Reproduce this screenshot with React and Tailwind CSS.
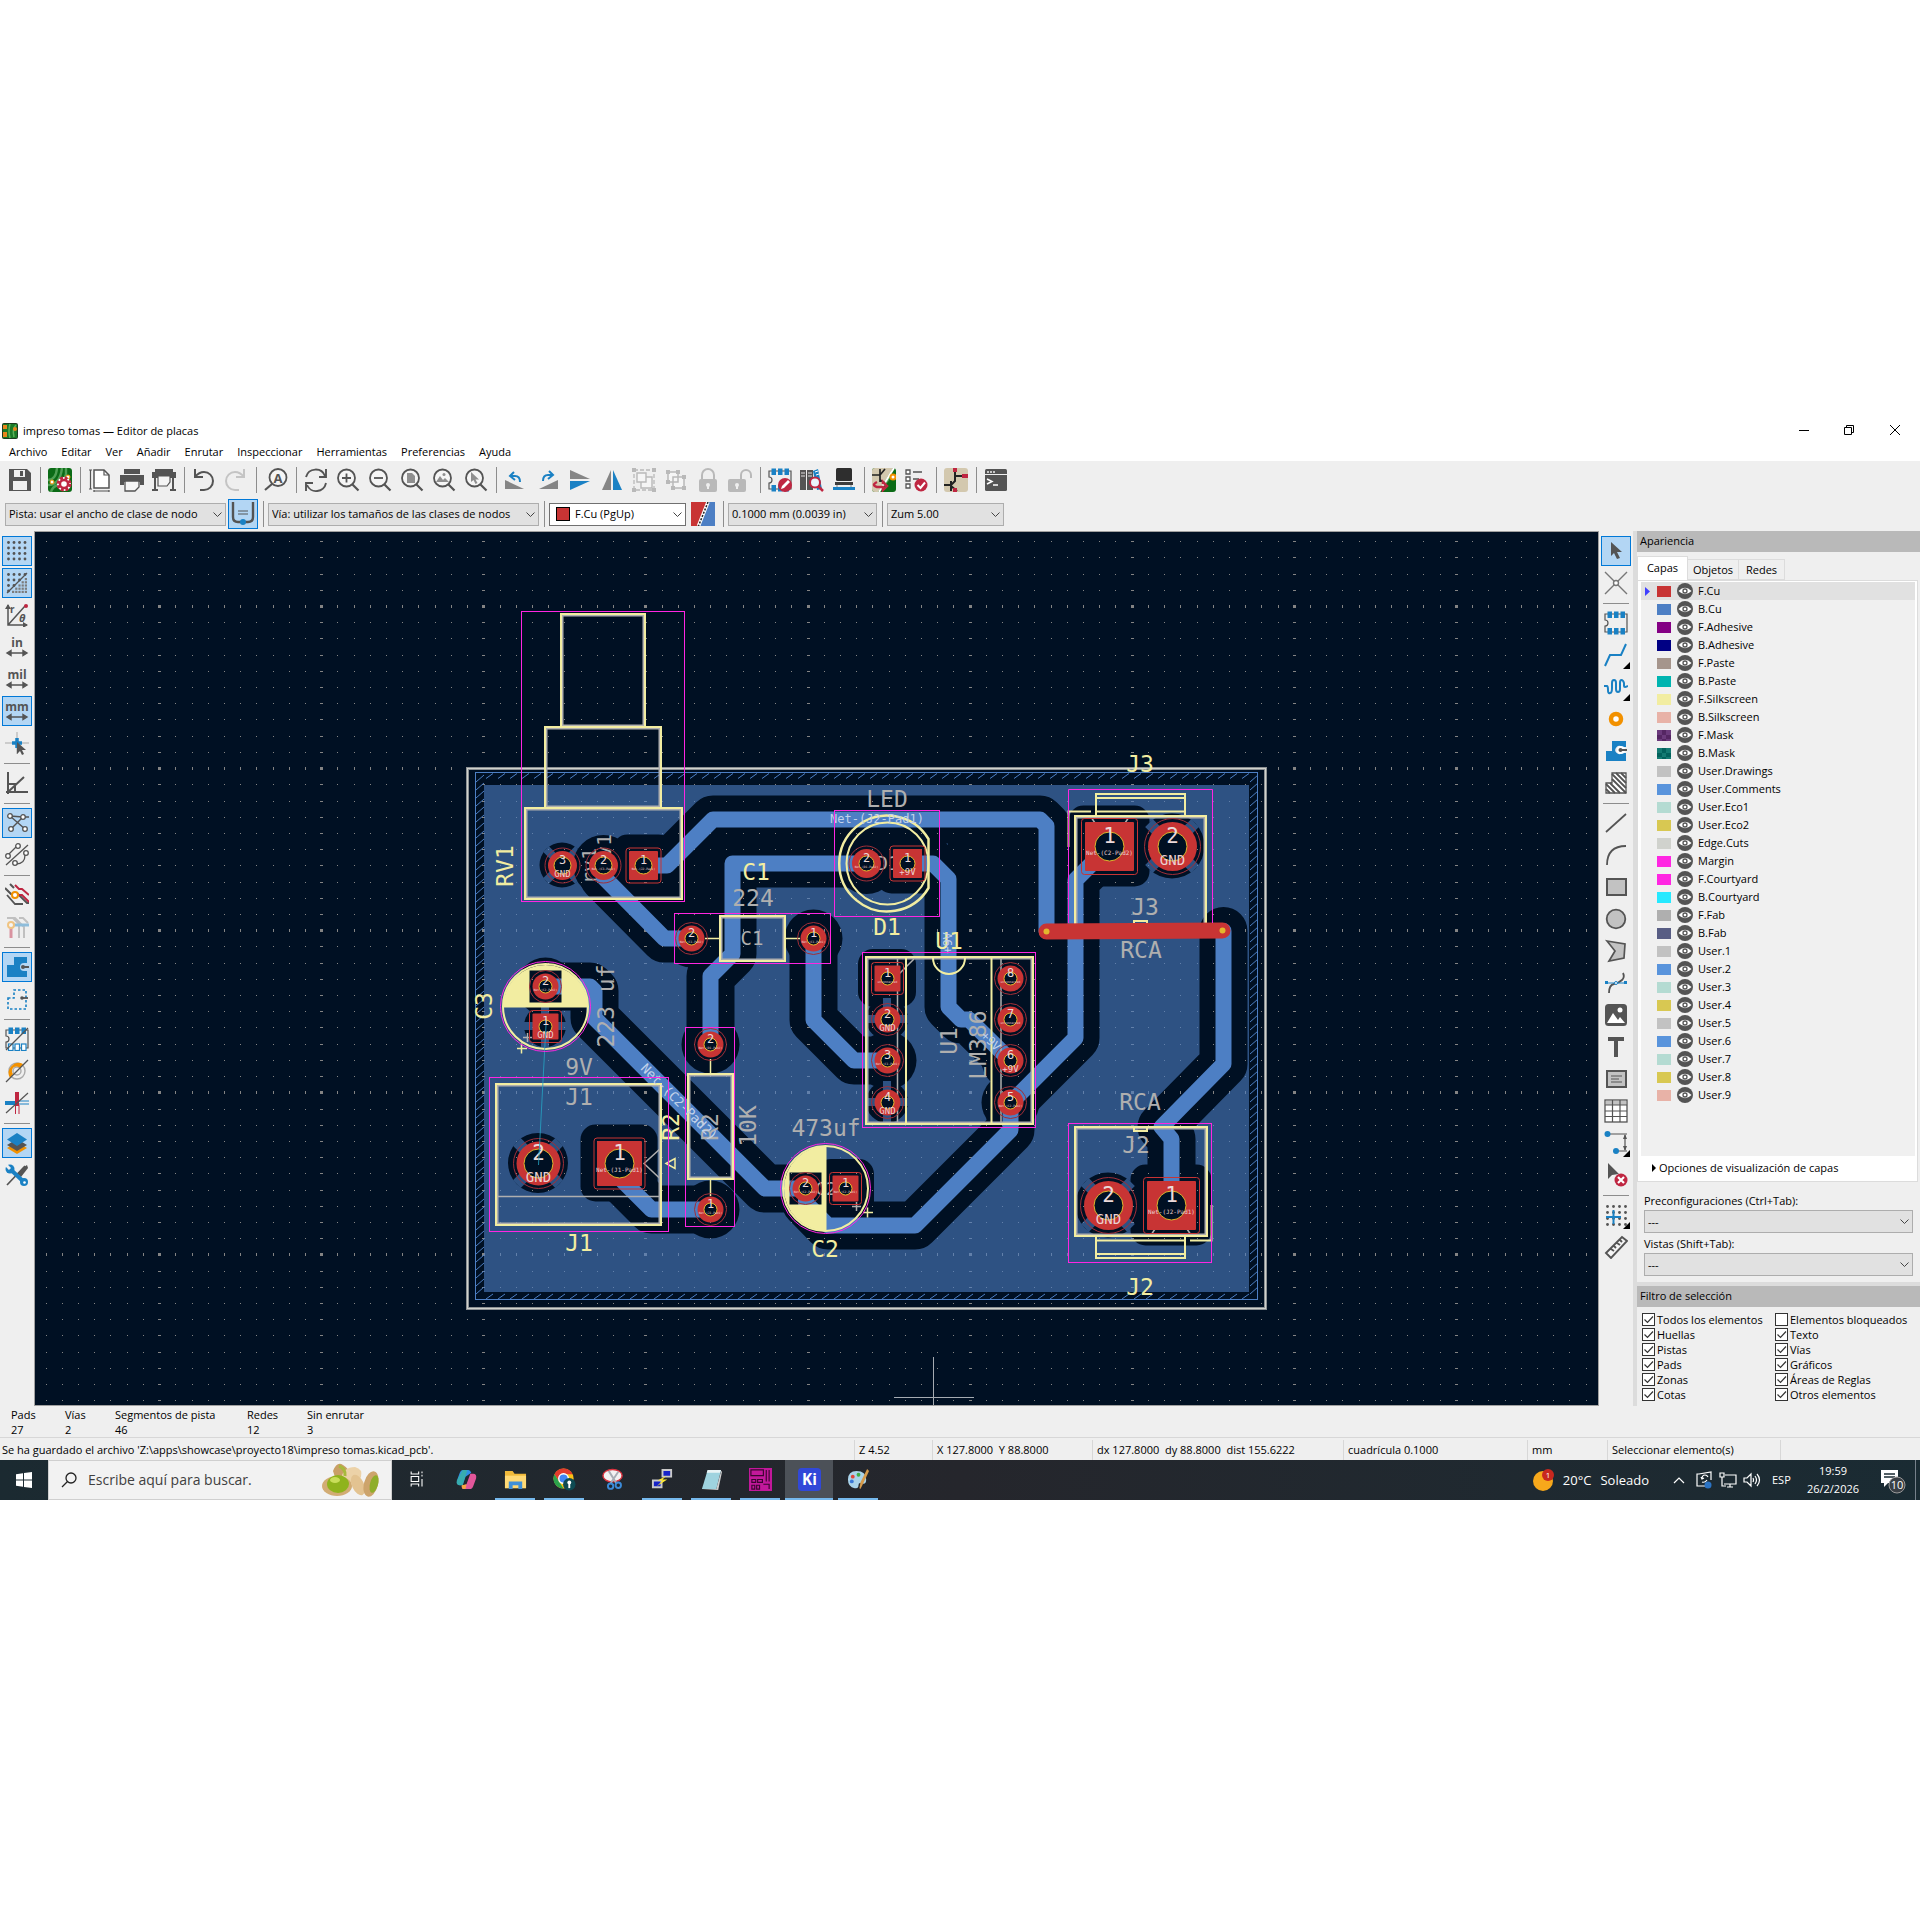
import React, { useState } from 'react';
import clsx from 'clsx';

const DARK = '#545454';
const BLUE = '#1a81c4';
const RED = '#bf2641';
const GREY = '#b9b9b9';
const ORANGE = '#f29100';

const Magnifier = ({ children }) => (
  <>
    <circle cx="10.5" cy="10" r="8.5" fill="#f5f5f5" stroke={DARK} strokeWidth="1.8" />
    <path d="M16.5 16.5l6 6" stroke={DARK} strokeWidth="2.2" />
    {children}
  </>
);

const Chip = ({ slash }) => (
  <>
    <path d="M1 3h22v18H1v-6q3 0 3-3t-3-3z" fill="none" stroke={DARK} strokeWidth="1.2" />
    {[3.5, 10, 16.5].map((x) => (
      <g key={x}>
        <rect x={x} y="0.5" width="4.5" height="6.5" fill={BLUE} />
        <rect x={x} y="17" width="4.5" height="6.5" fill={slash ? '#fff' : BLUE} stroke={BLUE} strokeWidth={slash ? 1.2 : 0} />
      </g>
    ))}
    {slash && <path d="M1 23L23 1" stroke={DARK} strokeWidth="1.2" />}
  </>
);

const Board = () => (
  <>
    <rect width="24" height="24" rx="3" fill="#0b6b16" />
    <path d="M0 12Q8 12 9 0M0 17Q12 17 14 0M3 24Q4 19 10 17T18 6V0" fill="none" stroke="#4fa055" strokeWidth="2.4" />
  </>
);

const Arrows = ({ y = 18 }) => (
  <path d={`M4 ${y}h16M6 ${y - 2.5}L2 ${y}l4 2.5zM18 ${y - 2.5}l4 2.5-4 2.5z`} fill={DARK} stroke={DARK} strokeWidth="1.4" />
);

const Unit = ({ children }) => (
  <>
    <text x="12" y="12" textAnchor="middle" fontSize="12" fontWeight="700" fill={DARK} fontFamily="Open Sans, sans-serif">{children}</text>
    <Arrows />
  </>
);

const dots = (max, step = 5.5) => {
  const out = [];
  for (let i = 0; i < 4; i++) for (let j = 0; j < 4; j++) if (i + j <= max) out.push([3.5 + i * step, 3.5 + j * step]);
  return out.map(([x, y]) => <circle key={`${x}-${y}`} cx={x} cy={y} r="1.4" fill={DARK} />);
};

const ICONS = {
  save: <><path d="M1 1h18l4 4v18H1z" fill={DARK} /><path d="M6 2h11v7H6zM5 13h14v9H5z" fill="#efefef" /><path d="M12 3h3v5h-3z" fill={DARK} /></>,
  board: <><Board /><circle cx="4" cy="14" r="2" fill="#fff" stroke={ORANGE} /><circle cx="20" cy="9" r="2" fill="#fff" stroke={ORANGE} /><circle cx="16" cy="16" r="4.5" fill="none" stroke="#fff" strokeWidth="5" /><circle cx="16" cy="16" r="6" fill="none" stroke={RED} strokeWidth="3" strokeDasharray="3 1.7" /><circle cx="16" cy="16" r="4" fill="#fff" stroke={RED} strokeWidth="2.4" /></>,
  page: <><path d="M6 2h10l5 5v13H6z" fill="#fff" stroke={DARK} strokeWidth="1.5" /><path d="M16 2v5h5M1 2h3M2.5 2v19M1 21h3M6 23h15M6 22v2M21 22v2" fill="none" stroke={DARK} strokeWidth="1.2" /></>,
  print: <><path d="M4 1h16v5H4zM0 7h24v10h-4v-3H4v3H0z" fill={DARK} /><path d="M5 13h14v6l-4 4H5z" fill="#f5f5f5" stroke={DARK} strokeWidth="1.3" /></>,
  plot: <><path d="M3 1h18v4H3zM0 4h24v6H0zM2 10h2v12H2zM20 10h2v12h-2zM0 21h6v2H0zM18 21h6v2h-6z" fill={DARK} /><path d="M6 8h12v6l-3 4H6z" fill="#f5f5f5" stroke={DARK} strokeWidth="1.2" /></>,
  undo: <path d="M3 1v8h8M3 9Q7 4 12 4a9 9 0 0 1 0 18H8" fill="none" stroke={DARK} strokeWidth="2" />,
  redo: <path d="M20 1v8h-8M20 9Q16 4 11 4a9 9 0 0 0 0 18h4" fill="none" stroke="#c4c4c4" strokeWidth="2" />,
  find: <><circle cx="14" cy="9.5" r="8.5" fill="#f5f5f5" stroke={DARK} strokeWidth="1.8" /><path d="M8 16l-7 6" stroke={DARK} strokeWidth="2.2" /><text x="14" y="14.5" textAnchor="middle" fontSize="13" fontWeight="700" fill={DARK} fontFamily="Open Sans, sans-serif">A</text></>,
  refresh: <path d="M2 9a10 10 0 0 1 19-1M22 15a10 10 0 0 1-19 2M22 1v8h-7M2 23v-8h7" fill="none" stroke={DARK} strokeWidth="1.9" />,
  zoomIn: <Magnifier><path d="M6 10h9M10.5 5.5v9" stroke={DARK} strokeWidth="1.8" /></Magnifier>,
  zoomOut: <Magnifier><path d="M6 10h9" stroke={DARK} strokeWidth="1.8" /></Magnifier>,
  zoomPage: <Magnifier><path d="M7 5h5l3 3v7H7z" fill="#8f8f8f" /></Magnifier>,
  zoomFit: <Magnifier><path d="M4 14l4-6 3 4 2-2 4 4z" fill="#8f8f8f" /><circle cx="12" cy="6.5" r="1.5" fill="#8f8f8f" /></Magnifier>,
  zoomSel: <Magnifier><path d="M7 4v10l2.5-2 2 4 2-1-2-3.500h3.5z" fill="#8f8f8f" /></Magnifier>,
  rotL: <><path d="M1 12v9h19z" fill="#858585" /><path d="M10 4L6 8l5 4M6 8h5q5 0 5 6" fill="none" stroke={BLUE} strokeWidth="2" /></>,
  rotR: <><path d="M22 12v9H3z" fill="#858585" /><path d="M13 3l4 4-5 4M17 7h-5q-5 0-5 6" fill="none" stroke={BLUE} strokeWidth="2" /></>,
  flipV: <><path d="M2 2l20 9H2z" fill="#858585" /><path d="M2 22l20-9H2z" fill={BLUE} /></>,
  flipH: <><path d="M2 22l9-20v20z" fill="#858585" /><path d="M22 22L13 2v20z" fill={BLUE} /></>,
  group: <><path d="M2 2h20v20H2z" fill="none" stroke={GREY} strokeWidth="1.3" strokeDasharray="4 2" /><path d="M0 0h4v4H0zM20 0h4v4h-4zM0 20h4v4H0zM20 20h4v4h-4z" fill={GREY} /><path d="M9 9h11v11H9z" fill="#f5f5f5" stroke={GREY} strokeWidth="1.4" /><path d="M5 5h9v9H5z" fill="#f5f5f5" stroke={GREY} strokeWidth="1.4" /></>,
  ungroup: <><path d="M9 9h11v11H9zM4 4h10v10H4z" fill="#f5f5f5" stroke={GREY} strokeWidth="1.5" /><path d="M2 2h4v4H2zM12 2h4v4h-4zM2 12h4v4H2zM18 7h4v4h-4zM7 18h4v4H7zM18 18h4v4h-4z" fill={GREY} /></>,
  lock: <><path d="M6 12V7a6 6 0 0 1 12 0v5" fill="none" stroke={GREY} strokeWidth="2" /><rect x="3" y="11" width="18" height="13" rx="2" fill={GREY} /><circle cx="12" cy="17" r="2" fill="#efefef" /><path d="M11 17h2v4h-2z" fill="#efefef" /></>,
  unlock: <><path d="M13 12V7a5 5 0 0 1 10 0v3" fill="none" stroke={GREY} strokeWidth="2" /><rect x="0" y="11" width="18" height="13" rx="2" fill={GREY} /><circle cx="9" cy="17" r="2" fill="#efefef" /><path d="M8 17h2v4H8z" fill="#efefef" /></>,
  fpEdit: <><Chip /><circle cx="17" cy="17" r="7" fill={RED} /><path d="M13 21l1-3 6-6 2 2-6 6z" fill="#fff" /></>,
  lib: <><path d="M0 2h6v20H0zM7 2h6v20H7z" fill={DARK} /><path d="M1 5h4M1 8h4M8 5h4M8 8h4" stroke="#ddd" strokeWidth="1.2" /><path d="M13 3l5-2 4 20-5 1z" fill={BLUE} /><path d="M15 4l3-1M16 7l3-1" stroke="#fff" /><circle cx="15" cy="14.5" r="5" fill="#eaf3fa" stroke={RED} strokeWidth="2" /><path d="M18 18l5 5" stroke={RED} strokeWidth="2.5" /></>,
  fpView: <><rect x="4" y="0" width="16" height="13" rx="1.5" fill="#2e2e2e" /><path d="M3 14h18v3H3z" fill="#3d3d3d" /><path d="M5 17v3M19 17v3" stroke="#888" /><path d="M1 19h22v3H1z" fill={BLUE} /></>,
  update: <><Board /><path d="M0 3q0-3 3-3h18L6 24H3q-3 0-3-3z" fill="#d3c8ae" /><path d="M22 0L7 24" stroke="#fff" strokeWidth="2" /><path d="M0 7h8M8 1v13M8 7l5-6M8 12l5 3" stroke="#222" strokeWidth="1.7" /><circle cx="21" cy="9" r="2.5" fill="#fff" stroke={ORANGE} strokeWidth="2" /><path d="M5 14q-6 3 0 5h6v3l4-4-4-4v2" fill="none" stroke={RED} strokeWidth="2.5" /></>,
  drc: <><path d="M2 2h4v4H2zM2 9h4v4H2zM2 16h4v4H2z" fill="#fff" stroke={DARK} strokeWidth="1.3" /><path d="M9 4h9M9 11h6" stroke={DARK} strokeWidth="1.4" /><circle cx="17" cy="17" r="6.5" fill={RED} /><path d="M13.5 17l3 3 4.5-5.5" fill="none" stroke="#fff" strokeWidth="2" /></>,
  sch: <><rect width="24" height="24" rx="3" fill="#d3c8ae" /><path d="M11 0v8h11M11 8v5l-5 5M0 17h6M7 13v10M7 18l6 5" fill="none" stroke="#222" strokeWidth="2" /><path d="M9 0h4v4H9zM18 6h6v4h-6zM9 20h4v4H9z" fill={RED} /></>,
  console: <><rect x="1" y="1" width="22" height="22" rx="1.5" fill={DARK} /><path d="M1 6.5h22" stroke="#efefef" /><path d="M3 4h2M6 4h2M9 4h2" stroke="#eee" strokeWidth="1.4" /><path d="M3 11l5 2.5-5 2.5M9 17h5" fill="none" stroke="#fff" strokeWidth="1.5" /></>,
  trackAuto: <><path d="M2 0v15q0 5 5 5h10q5 0 5-5V0" fill="none" stroke={DARK} strokeWidth="2.4" /><path d="M7 9h10M7 12h10" stroke={DARK} strokeWidth="1.2" /><circle cx="12" cy="20" r="3" fill={BLUE} /></>,
  layerPair: <><path d="M0 0h16L7 24H0z" fill="#c83434" /><path d="M18 0h6v24H8z" fill="#4d7fc4" /><path d="M17 0L7.5 24" stroke="#fff" strokeWidth="3.5" /><path d="M17 0L7.5 24" stroke="#222" strokeWidth="1.5" strokeDasharray="2 1.5" /></>,
  grid: dots(9),
  gridOver: <>{dots(3)}<path d="M2 22L22 2" stroke={DARK} strokeWidth="1.2" />{[0, 1, 2, 3, 4].flatMap((i) => [0, 1, 2, 3, 4].filter((j) => i + j >= 4).map((j) => <rect key={`${i}${j}`} x={7 + i * 3.2} y={7 + j * 3.2} width="2.2" height="2.2" fill="#7c7c7c" />))}</>,
  polar: <><path d="M3 2v20h19M3 22L20 3" fill="none" stroke={DARK} strokeWidth="1.5" /><path d="M0 6l3-5 3 5zM18 19l5 3-5 3z" fill={DARK} /><circle cx="21" cy="3" r="2" fill={RED} /><text x="5" y="10" fontSize="10" fontWeight="700" fill={DARK} fontFamily="Open Sans, sans-serif">r</text><text x="14" y="19" fontSize="11" fontStyle="italic" fontWeight="700" fill={DARK} fontFamily="Open Sans, sans-serif">θ</text></>,
  inch: <Unit>in</Unit>,
  mil: <Unit>mil</Unit>,
  mm: <Unit>mm</Unit>,
  crosshair: <><path d="M0 12h24M12 1v22" stroke="#a9a9a9" /><path d="M7 12h10M12 7v10" stroke={BLUE} strokeWidth="3.5" /><path d="M12 11v12l3-3 2 4 2-1-2-4h4z" fill={DARK} /></>,
  angle: <path d="M3 1v22M1 21h22M3 21L19 6M3 13h7v8" fill="none" stroke={DARK} strokeWidth="2" />,
  ratsnest: <><path d="M5 5l15 13M6 18L18 6h6M5 5l13 1" fill="none" stroke={DARK} strokeWidth="1.4" />{[[5, 5], [18, 6], [6, 18], [20, 18]].map(([x, y]) => <circle key={`${x}${y}`} cx={x} cy={y} r="2.3" fill="#fff" stroke={DARK} strokeWidth="1.3" />)}</>,
  curved: <><path d="M1 22L23 2M3 12l9-9M11 21q9 0 9-9" fill="none" stroke={DARK} strokeWidth="1.3" />{[[3, 13], [13, 3], [10, 20], [21, 10]].map(([x, y]) => <circle key={`${x}${y}`} cx={x} cy={y} r="2.3" fill="#fff" stroke={DARK} strokeWidth="1.3" />)}</>,
  highlight: <><path d="M0 5l6 6h7l9 9h2M5 1l4 4" fill="none" stroke={DARK} strokeWidth="2" /><path d="M10 2l4 4h3l7 6M12 12h5l7 7" fill="none" stroke={RED} strokeWidth="2" /><path d="M2 12l8 9h8" fill="none" stroke={DARK} strokeWidth="1.8" /><circle cx="10" cy="12" r="3" fill="#fff" stroke={ORANGE} strokeWidth="2" /></>,
  netColor: <g opacity=".45"><path d="M2 3h8l9 9v11M8 3l6 6v14M14 3h4l5 5" fill="none" stroke="#888" strokeWidth="2" /><path d="M6 12v11" stroke={RED} strokeWidth="3" /><path d="M9 10h15" stroke={BLUE} strokeWidth="3" /><circle cx="6" cy="10" r="3" fill="#fff" stroke={ORANGE} strokeWidth="2" /></g>,
  zone: <><path d="M2 10h7V2h13v6h-3a4 4 0 1 0 0 8h3v6H2z" fill={BLUE} /><path d="M18 12h6" stroke={DARK} strokeWidth="2" /><circle cx="18" cy="12" r="2" fill={DARK} /></>,
  zoneOutline: <><path d="M3 11h6V3h12v19H3z" fill="none" stroke={BLUE} strokeWidth="1.6" strokeDasharray="2.5 2" /><path d="M17 11h6" stroke={DARK} strokeWidth="1.8" /><circle cx="17" cy="11" r="1.8" fill={DARK} /></>,
  chipSlash: <Chip slash />,
  padSketch: <><circle cx="12" cy="12" r="8" fill="none" stroke="#aaa" strokeWidth="1.4" /><circle cx="12" cy="12" r="4" fill="none" stroke="#aaa" strokeWidth="1.4" /><path d="M5 19a10 10 0 0 1 13-14l-3 4a4.500 4.500 0 0 0-7 6z" fill={ORANGE} /><path d="M1 23L23 1" stroke={DARK} strokeWidth="1.2" /></>,
  trackSketch: <><path d="M0 12h12" stroke={BLUE} strokeWidth="4" /><path d="M12 10h12M12 13h12" stroke={BLUE} /><path d="M12 1v14" stroke={RED} strokeWidth="4" /><path d="M10.5 14v9M14 14v9" stroke={RED} /><path d="M1 22L23 2" stroke={DARK} strokeWidth="1.2" /></>,
  layers: <><path d="M12 11l10 6-10 6-10-6z" fill={ORANGE} /><path d="M12 8l10 6-10 6-10-6z" fill={DARK} /><path d="M12 2l10 6.5-10 6.5-10-6.500z" fill={BLUE} /></>,
  tools: <><path d="M2 22L20 3" stroke={DARK} strokeWidth="1.7" /><path d="M12 11l7-7 3-2 1 3-7 9z" fill={DARK} /><path d="M4 5l16 15" stroke={BLUE} strokeWidth="4" /><circle cx="5" cy="6" r="4.5" fill={BLUE} /><circle cx="19" cy="19" r="4" fill={BLUE} /><path d="M0 1l5 5" stroke="#efefef" strokeWidth="3" /><circle cx="19.5" cy="19.5" r="1.3" fill="#fff" /></>,
  select: <path d="M7 3v14l3-3 3 6 3-1-3-6h5z" fill={DARK} />,
  localRats: <><path d="M1 1l22 22M23 1L1 23" stroke="#777" strokeWidth="1.4" /><circle cx="12" cy="12" r="2.5" fill="#fff" stroke="#777" strokeWidth="1.4" /></>,
  chip: <Chip />,
  route: <path d="M1 23l5-11h11l5-11" fill="none" stroke={BLUE} strokeWidth="2" />,
  tune: <path d="M0 11h3q1 0 1 4t2 3q2 0 2-5V8q0-3 2-3t2 3v6q0 3 2 3t2-3V8q0-3 1.500-3T20 8v3q0 2 4 0" fill="none" stroke={BLUE} strokeWidth="2" />,
  via: <circle cx="12" cy="12" r="5" fill="#fff" stroke={ORANGE} strokeWidth="4.5" />,
  zoneWhite: <><path d="M2 12h6V2h14v6h-4a4 4 0 1 0 0 6h4v8H2z" fill={BLUE} /><circle cx="17" cy="11" r="4" fill="#fff" /><path d="M17 11h6" stroke={DARK} strokeWidth="2" /><circle cx="16.5" cy="11" r="2" fill={DARK} /></>,
  ruleArea: <><path d="M2 12h6V2h14v20H2z" fill="#fff" stroke={DARK} strokeWidth="1.3" /><path d="M8 3l14 14M12 2l10 10M17 2l5 5M8 8l14 14M6 12l10 10M2 13l9 9M2 18l4 4" stroke={DARK} strokeWidth="1.8" /></>,
  line: <path d="M2 21L22 3" stroke={DARK} strokeWidth="1.7" />,
  arc: <path d="M3 22Q3 3 22 3" fill="none" stroke={DARK} strokeWidth="1.8" />,
  rect: <rect x="3" y="4" width="19" height="16" fill="#c2c2c2" stroke={DARK} strokeWidth="2" />,
  circle: <circle cx="12" cy="12" r="9.3" fill="#c2c2c2" stroke={DARK} strokeWidth="1.8" />,
  poly: <path d="M3 2l18 3-1 14-15 3 6-10z" fill="#c2c2c2" stroke={DARK} strokeWidth="1.7" />,
  bezier: <><path d="M5 22q0-8 5-9t8-4 1-7" fill="none" stroke={DARK} strokeWidth="1.8" /><path d="M2 12h20" stroke={BLUE} /><path d="M1 10h3v3H1zM20 10h3v3h-3z" fill={BLUE} /><circle cx="12" cy="12" r="1.5" fill="#fff" stroke={BLUE} /></>,
  image: <><rect x="1" y="1" width="22" height="22" rx="3.5" fill={DARK} /><path d="M3 20l6-10 5 7 2-3 5 6z" fill="#fff" /><circle cx="16" cy="7" r="2.5" fill="#fff" /></>,
  text: <path d="M4 2h16v4h-6v16h-4V6H4z" fill={DARK} />,
  textBox: <><rect x="3" y="4" width="19" height="16" fill="#c2c2c2" stroke={DARK} strokeWidth="2" /><path d="M7 9h11M7 12h8M7 15h11" stroke={DARK} strokeWidth="1.2" /></>,
  table: <><rect x="1" y="1" width="22" height="22" fill="#fff" stroke={DARK} strokeWidth="1.3" /><path d="M2 2h20v4H2z" fill="#c2c2c2" /><path d="M1 6h22M1 12h22M1 17.5h22M8.5 1v22M16 1v22" stroke={DARK} strokeWidth="1.2" /></>,
  dimension: <><path d="M3 3h20M12 20h11M21 4v15" stroke={DARK} strokeWidth="1.2" /><path d="M19 8l2-5 2 5zM19 15l2 5 2-5z" fill={DARK} /><circle cx="3.5" cy="3" r="3" fill={BLUE} /><circle cx="12" cy="20" r="3" fill={BLUE} /></>,
  remove: <><path d="M4 0v16l4-4 7-1z" fill={DARK} /><circle cx="17" cy="17" r="6.5" fill={RED} /><path d="M14 14l6 6M20 14l-6 6" stroke="#fff" strokeWidth="2.2" /></>,
  origin: <>{dots(9, 6)}<path d="M2 14h15M9.5 7v14" stroke={BLUE} strokeWidth="2" /></>,
  ruler: <path d="M2 18L18 2l5 4L7 23zM7 14l3 2M10 11l2 2M13 8l3 2M16 5l2 2" fill="#f5f5f5" stroke={DARK} strokeWidth="1.9" />,
};

const Icon = ({ name, className = 'w-6 h-6' }) => (
  <svg viewBox="0 0 24 24" className={clsx('shrink-0', className)} aria-hidden="true">{ICONS[name]}</svg>
);

const ToolButton = ({ icon, label, active, flyout, disabled }) => (
  <button
    type="button"
    aria-label={label}
    title={label}
    disabled={disabled}
    className={clsx(
      'relative w-[30px] h-[30px] shrink-0 flex items-center justify-center border',
      active ? 'bg-[#b3d6f4] border-[#0078d7]' : 'border-transparent hover:bg-[#d8e6f2]'
    )}
  >
    <Icon name={icon} />
    {flyout && (
      <svg viewBox="0 0 7 7" className="absolute right-0 bottom-0 w-[7px] h-[7px]" aria-hidden="true">
        <path d="M7 0v7H0z" />
      </svg>
    )}
  </button>
);

const VSep = () => <div className="w-1.5 h-[26px] shrink-0 flex justify-center"><div className="w-px h-full bg-[#8d8d8d]" /></div>;
const HSep = () => <div className="w-[26px] ml-0.5 h-1.5 shrink-0 flex items-center"><div className="h-px w-full bg-[#8d8d8d]" /></div>;

const TOP_TOOLS = [
  ['save', 'Guardar'], null, ['board', 'Configuración de placa'], null, ['page', 'Ajustes de página'], ['print', 'Imprimir'], ['plot', 'Trazar'], null,
  ['undo', 'Deshacer'], ['redo', 'Rehacer', { disabled: true }], null, ['find', 'Buscar'], null, ['refresh', 'Refrescar'], ['zoomIn', 'Acercar'],
  ['zoomOut', 'Alejar'], ['zoomPage', 'Ajustar a página'], ['zoomFit', 'Ajustar a objetos'], ['zoomSel', 'Zum a selección'], null,
  ['rotL', 'Rotar a la izquierda'], ['rotR', 'Rotar a la derecha'], ['flipV', 'Reflejar verticalmente'], ['flipH', 'Reflejar horizontalmente'],
  ['group', 'Agrupar', { disabled: true }], ['ungroup', 'Desagrupar', { disabled: true }], ['lock', 'Bloquear', { disabled: true }],
  ['unlock', 'Desbloquear', { disabled: true }], null, ['fpEdit', 'Editor de huellas'], ['lib', 'Navegador de huellas'], ['fpView', 'Visor 3D'], null,
  ['update', 'Actualizar placa'], ['drc', 'Comprobar reglas'], null, ['sch', 'Editor de esquemas'], null, ['console', 'Consola'],
];

const LEFT_TOOLS = [
  ['grid', 'Mostrar cuadrícula', { active: true }], ['gridOver', 'Anulaciones de cuadrícula', { active: true }], ['polar', 'Coordenadas polares'],
  ['inch', 'Pulgadas'], ['mil', 'Milésimas'], ['mm', 'Milímetros', { active: true }], ['crosshair', 'Cursor completo'], null, ['angle', 'Ángulos de 45°'], null,
  ['ratsnest', 'Mostrar conexiones', { active: true }], ['curved', 'Conexiones curvas'], null, ['highlight', 'Atenuar capas'], ['netColor', 'Resaltar nodo', { disabled: true }], null,
  ['zone', 'Mostrar zonas', { active: true }], ['zoneOutline', 'Contorno de zonas'], null, ['chipSlash', 'Huellas en boceto'], ['padSketch', 'Pads en boceto'],
  ['trackSketch', 'Pistas en boceto'], null, ['layers', 'Gestor de capas', { active: true }], ['tools', 'Propiedades'],
];

const RIGHT_TOOLS = [
  ['select', 'Seleccionar', { active: true }], ['localRats', 'Conexiones locales'], null, ['chip', 'Añadir huella'], ['route', 'Enrutar pista', { flyout: true }],
  ['tune', 'Ajustar longitud', { flyout: true }], ['via', 'Añadir vía'], ['zoneWhite', 'Añadir zona'], ['ruleArea', 'Área de reglas'], null, ['line', 'Línea'],
  ['arc', 'Arco'], ['rect', 'Rectángulo'], ['circle', 'Círculo'], ['poly', 'Polígono'], ['bezier', 'Curva Bézier'], ['image', 'Imagen'], ['text', 'Texto'],
  ['textBox', 'Caja de texto'], ['table', 'Tabla'], ['dimension', 'Cota', { flyout: true }], ['remove', 'Borrar'], null,
  ['origin', 'Origen de cuadrícula', { flyout: true }], ['ruler', 'Medir'],
];

const renderTools = (tools, Sep) =>
  tools.map((t, i) => (t ? <ToolButton key={t[0]} icon={t[0]} label={t[1]} {...t[2]} /> : <Sep key={i} />));

const Combo = ({ label, value, id, className, white }) => (
  <div className={clsx('relative shrink-0', className)}>
    <select
      id={id}
      aria-label={label}
      className={clsx(
        'block appearance-none w-full h-[23px] rounded-none outline-none border pr-5 text-[11px] leading-4',
        white ? 'bg-white border-[#707070] pl-[25px]' : 'bg-[#e1e1e1] border-[#adadad] pl-[3px]'
      )}
    >
      <option>{value}</option>
    </select>
    {white && <span className="absolute left-[7px] top-1 w-3.5 h-3.5 bg-[#c83434] border border-black" />}
    <svg viewBox="0 0 9 6" className="absolute right-1 top-[9px] w-[9px] h-1.5 pointer-events-none" aria-hidden="true">
      <path d="M.5 .5l4 4 4-4" fill="none" stroke="#444" />
    </svg>
  </div>
);

/* ---------- board canvas ---------- */

const COPPER = '#4d7fc4';
const SILK = '#f2eda1';
const FAB = '#afafaf';
const PAD = '#c83434';
const COURT = '#ff26e2';

const TRACKS = [
  'M643 865.5H667L713 819.5H1040L1046.5 826V931',
  'M1223.5 931V1064L1161.5 1127L1171.5 1139V1206',
  'M603.5 866V877L664.5 938.5H691',
  'M866 863.5H732.5V954L710.5 976V1045',
  'M813.5 938.5V1020L854 1060.5H887',
  'M907 863.5H933L948.5 879V1007L961 1019.5H969L1010.5 1060.5',
  'M1109.5 846L1075.5 880V1038L1010.5 1103V1130L915 1225.5H828L806 1203V1188.5',
  'M806 1188.5H765L594.5 1018V991L590 986.5H545.5',
  'M620 1164V1178L651.5 1209.5H710.5',
];

// x, y, number, net, size, hole radius, square, thermal spoke angle
const PADS = [
  [562, 865, '3', 'GND', 14.5, 8.5, false, 45],
  [603, 865, '2', 'Net-(C3-Pad2)', 14.5, 8.5],
  [643, 865, '1', 'Net-(J2-Pad1)', 14.5, 8.5, true],
  [691, 938, '2', 'Net-(C1-Pad2)', 13, 6.5],
  [813, 938, '1', 'Net-(C1-Pad1)', 13, 6.5],
  [866, 863, '2', 'Net-(D1-Pad2)', 14.5, 7.5],
  [907, 863, '1', '+9V', 14.5, 7.5, true],
  [887, 978, '1', 'unconnected', 13, 6.5, true],
  [887, 1019, '2', 'GND', 13, 6.5, false, 0],
  [887, 1060, '3', 'Net-(C1-Pad1)', 13, 6.5],
  [887, 1102, '4', 'GND', 13, 6.5, false, 0],
  [1010, 978, '8', 'unconnected', 13, 6.5],
  [1010, 1019, '7', 'unconnected', 13, 6.5],
  [1010, 1060, '6', '+9V', 13, 6.5],
  [1010, 1102, '5', 'Net-(C2-Pad2)', 13, 6.5],
  [1109, 846, '1', 'Net-(C2-Pad2)', 24.5, 14.5, true],
  [1172, 846, '2', 'GND', 24.5, 14.5, false, 45],
  [1171, 1205, '1', 'Net-(J2-Pad1)', 24.5, 14.5, true],
  [1108, 1205, '2', 'GND', 24.5, 14.5, false, 45],
  [545, 986, '2', 'Net-(C2-Pad2)', 13, 6.5],
  [545, 1026, '1', 'GND', 13, 6.5, true, 0],
  [538, 1163, '2', 'GND', 22, 14.5, false, 45],
  [619, 1163, '1', 'Net-(J1-Pad1)', 22.5, 14.5, true],
  [710, 1044, '2', 'Net-(D1-Pad2)', 13, 6.5],
  [710, 1209, '1', 'Net-(J1-Pad1)', 13, 6.5],
  [805, 1188, '2', 'Net-(C2-Pad2)', 13, 6.5],
  [845, 1188, '1', 'Net-(C2-Pad1)', 13, 6.5, true],
];

const gridPath = () => {
  let d = '';
  for (let i = -2; i < 98; i++) {
    for (let j = -5; j < 51; j++) {
      const x = Math.round(483.3 + (i - 27) * 16.21);
      const y = Math.round(606 + j * 16.21);
      const mx = (i - 27) % 10 === 0;
      const my = j % 10 === 0;
      const w = mx ? 3 : 1;
      const h = my ? 3 : 1;
      d += `M${x - (mx ? 1 : 0)} ${y - (my ? 1 : 0)}h${w}v${h}h-${w}z`;
    }
  }
  return d;
};

const hatchPath = () => {
  let d = '';
  for (let x = 486; x < 1250; x += 12) d += `M${x} 778.5l7 -5M${x} 1299l7 -5`;
  for (let y = 782; y < 1298; y += 8) d += `M476 ${y}l8 -7M1250 ${y}l8 -7`;
  return d;
};

const Outline = ({ x, y, w, h }) => (
  <>
    <rect x={x + 1} y={y + 1} width={w - 2} height={h - 2} fill="none" stroke={FAB} strokeWidth="3" />
    <rect x={x} y={y} width={w} height={h} fill="none" stroke={SILK} strokeWidth="2" />
  </>
);

const Court = ({ x, y, w, h }) => <rect x={x} y={y} width={w} height={h} fill="none" stroke={COURT} />;

const Label = ({ x, y, size = 23, color = FAB, rotate, children }) => (
  <text
    x={x}
    y={y}
    fontSize={size}
    fill={color}
    textAnchor="middle"
    fontFamily="DejaVu Sans Mono, monospace"
    transform={rotate ? `rotate(${rotate} ${x} ${y})` : undefined}
  >
    {children}
  </text>
);

const Pad = ({ pad }) => {
  const [x, y, num, net, r, hole, square] = pad;
  const cx = x + 0.5;
  const cy = y + 0.5;
  const big = r > 20;
  const halo = r + (r > 23 ? 3.5 : 3);
  const short = net.length < 4;
  const netSize = short ? (big ? 14 : 9) : big ? 6 : 3;
  return (
    <g>
      {square ? (
        <>
          <rect x={cx - r} y={cy - r} width={r * 2} height={r * 2} rx="1" fill={PAD} />
          <rect x={cx - halo} y={cy - halo} width={halo * 2} height={halo * 2} rx="3" fill="none" stroke={PAD} />
        </>
      ) : (
        <>
          <circle cx={cx} cy={cy} r={r} fill={PAD} />
          <circle cx={cx} cy={cy} r={halo} fill="none" stroke="#a02f38" />
        </>
      )}
      <circle cx={cx} cy={cy} r={hole} fill="#001023" stroke="#e3b72e" />
      <Label x={cx} y={cy - (big ? 4 : 2)} size={big ? 21 : 12} color="#ecdada">{num}</Label>
      <Label x={cx} y={short ? cy + (big ? 18 : 11) : cy + (big ? 8 : 4)} size={netSize} color="#ecd0d0">{net}</Label>
    </g>
  );
};

const Clearance = ({ pad }) => {
  const [x, y, , , r, , square, thermal] = pad;
  if (thermal !== undefined) {
    const o = r + 8;
    return (
      <g transform={`rotate(${thermal} ${x} ${y})`}>
        <circle cx={x} cy={y} r={o} fill="#000" />
        <path d={`M${x - o} ${y}h${o * 2}M${x} ${y - o}v${o * 2}`} stroke="#fff" strokeWidth={r > 20 ? 11 : 8} />
      </g>
    );
  }
  const o = r + 16;
  return square ? <rect x={x - o} y={y - o} width={o * 2} height={o * 2} rx="15" /> : <circle cx={x + 0.5} cy={y + 0.5} r={o} />;
};

const BoardCanvas = () => (
  <svg viewBox="35 532 1563 873" preserveAspectRatio="xMidYMid slice" className="absolute inset-0 w-full h-full" role="img" aria-label="Placa de circuito impreso">
    <defs>
      <mask id="pour" maskUnits="userSpaceOnUse" x="475" y="772" width="784" height="528">
        <rect x="475" y="772" width="784" height="528" fill="#fff" />
        <path d={TRACKS.join('')} fill="none" stroke="#000" strokeWidth="48" strokeLinejoin="round" strokeLinecap="round" />
        <path d="M948 830H1046V931L1075 1038L1010 1103L948 1008zM643 850H733V954L691 945H664L603 877z" />
        {PADS.map((p) => <Clearance key={`${p[0]}-${p[1]}`} pad={p} />)}
      </mask>
    </defs>

    <path d={gridPath()} fill="#848484" shapeRendering="crispEdges" />
    <rect x="484" y="785" width="765" height="507" fill={COPPER} opacity=".6" mask="url(#pour)" />
    <rect x="475.5" y="772.5" width="782" height="527" fill="none" stroke={COPPER} />
    <path d={hatchPath()} stroke={COPPER} fill="none" />
    <rect x="467.5" y="768.5" width="798" height="540" fill="none" stroke="#8d9194" strokeWidth="3" />
    <rect x="467.5" y="768.5" width="798" height="540" fill="none" stroke="#d0d2cd" />

    <path d={TRACKS.join('')} fill="none" stroke={COPPER} strokeWidth="16" strokeLinejoin="round" strokeLinecap="round" />

    {/* fabrication layer */}
    <path d="M497 1196.5H662M661 1148l-17 15.5 17 16M897.5 958V1124M1001 958V1124M898 975l16-16M1091 817l4 6M1129 817l-4 6M1151 1235l4-6M1191 1235l-4-6" fill="none" stroke={FAB} strokeWidth="1.5" />
    <Label x={596} y={866} rotate={-90} size={20}>rv1</Label>
    <Label x={611} y={852} rotate={-90} size={20}>rv1</Label>
    <Label x={753} y={906}>224</Label>
    <Label x={752} y={945} size={19}>C1</Label>
    <Label x={887} y={807}>LED</Label>
    <Label x={888} y={870} size={20}>D1</Label>
    <Label x={614} y={1006} rotate={-90}>223 uf</Label>
    <Label x={579} y={1075}>9V</Label>
    <Label x={579} y={1105}>J1</Label>
    <Label x={718} y={1127} rotate={-90}>R2</Label>
    <Label x={756} y={1126} rotate={-90}>10K</Label>
    <Label x={826} y={1136}>473uf</Label>
    <Label x={826} y={1195} size={18}>C2</Label>
    <Label x={957} y={1041} rotate={-90}>U1</Label>
    <Label x={986} y={1045} rotate={-90}>LM386</Label>
    <Label x={1145} y={915}>J3</Label>
    <Label x={1141} y={958}>RCA</Label>
    <Label x={1140} y={1110}>RCA</Label>
    <Label x={1136} y={1153}>J2</Label>
    <path d="M523 1037.5h9M527.5 1033v9M852 1206.5h9M856.5 1202v9" stroke={FAB} strokeWidth="1.5" />

    {/* silkscreen */}
    <Outline x={561} y={614} w={84} h={113} />
    <Outline x={545} y={727} w={116} h={81} />
    <Outline x={525} y={808} w={157} h={91} />
    <Outline x={720} y={916} w={65} h={45} />
    <Outline x={688} y={1074} w={45} h={105} />
    <Outline x={496} y={1084} w={165} h={141} />
    <Outline x={866} y={957} w={167} h={167} />
    <Outline x={1075} y={816} w={131} h={113} />
    <Outline x={1075} y={1127} w={132} h={109} />
    <path d="M705 938.5H719M786 938.5H800M710.5 1059V1073M710.5 1180V1196" stroke={SILK} strokeWidth="1.5" />
    <path d="M906 958V1123M991.5 958V1123M933 958a16 16 0 0 0 32 0" fill="none" stroke={SILK} strokeWidth="2" />
    <path d="M1096 815V794H1185V815M1096 798H1185M1068.5 847V811.5H1091M1096 811.5H1185" fill="none" stroke={SILK} strokeWidth="2" />
    <path d="M1096 1237V1258H1185V1237M1096 1254H1185M1211.5 1205V1240.5H1190M1096 1240.5H1185M1134 1127v4h13v-4M1134 925v-4h13v4" fill="none" stroke={SILK} strokeWidth="2" />
    <path d="M666 1163.5l9-5v10z" fill="none" stroke={SILK} strokeWidth="1.5" />
    <circle cx="887.5" cy="863.5" r="41" fill="none" stroke={SILK} strokeWidth="2" />
    <path d="M928.5 839A48 48 0 1 0 928.5 888z" fill="none" stroke={SILK} strokeWidth="2.5" />

    <circle cx="545.5" cy="1006.5" r="42.5" fill="none" stroke={SILK} strokeWidth="2" />
    <path d="M503 1007.5A42.5 42.5 0 0 1 588 1007.5zM529.5 970.5v32h32v-32z" fillRule="evenodd" fill={SILK} />
    <circle cx="825.5" cy="1188.5" r="42.5" fill="none" stroke={SILK} strokeWidth="2" />
    <path d="M826.5 1146A42.5 42.5 0 0 0 826.5 1231zM789.5 1172.5v32h32v-32z" fillRule="evenodd" fill={SILK} />
    <path d="M517 1048.5h10M521.5 1043.5v10M863 1212.5h10M867.5 1207.5v10" stroke={SILK} strokeWidth="1.5" />

    <path d="M1046.5 931.5L1222.5 930.5" stroke={PAD} strokeWidth="16" strokeLinecap="round" />
    <circle cx="1046.5" cy="931.5" r="3" fill="#e3b72e" />
    <circle cx="1222.5" cy="930.5" r="3" fill="#e3b72e" />

    {PADS.map((p) => <Pad key={`${p[0]}-${p[1]}`} pad={p} />)}
    <path d="M546 1025L538.5 1165" stroke="#26a5c4" opacity=".8" />

    <Label x={513} y={866} rotate={-90} color={SILK}>RV1</Label>
    <Label x={756} y={880} color={SILK}>C1</Label>
    <Label x={887} y={935} color={SILK}>D1</Label>
    <Label x={949} y={949} color={SILK}>U1</Label>
    <Label x={1140} y={772} color={SILK}>J3</Label>
    <Label x={1140} y={1295} color={SILK}>J2</Label>
    <Label x={579} y={1251} color={SILK}>J1</Label>
    <Label x={825} y={1257} color={SILK}>C2</Label>
    <Label x={492} y={1006} rotate={-90} color={SILK}>C3</Label>
    <Label x={679} y={1127} rotate={-90} color={SILK}>R2</Label>
    <Label x={877} y={823} size={12} color="#c3d3ea">Net-(J2-Pad1)</Label>
    <Label x={676} y={1105} size={13} rotate={45} color="#c3d3ea">Net-(C2-Pad2)</Label>
    <Label x={952} y={943} size={12} rotate={-90} color="#c3d3ea">+9V</Label>
    <Label x={988} y={1044} size={12} rotate={45} color="#c3d3ea">+9V</Label>

    <Court x={521.5} y={611.5} w={163} h={290} />
    <Court x={674.5} y={913.5} w={156} h={50} />
    <Court x={834.5} y={810.5} w={105} h={106} />
    <Court x={862.5} y={952.5} w={173} h={175} />
    <path d="M1068.5 923V789.5H1212.5V923" fill="none" stroke={COURT} />
    <Court x={1068.5} y={1123.5} w={143} h={139} />
    <Court x={489.5} y={1077.5} w={179} h={154} />
    <Court x={685.5} y={1027.5} w={49} h={199} />
    <circle cx="545.5" cy="1006.5" r="45" fill="none" stroke={COURT} />
    <circle cx="825.5" cy="1188.5" r="45" fill="none" stroke={COURT} />

    <path d="M894 1397.5H974M933.5 1357V1406" stroke="#a5abb2" />
  </svg>
);

/* ---------- appearance panel ---------- */

const LAYERS = [
  ['F.Cu', '#c83434'], ['B.Cu', '#4d7fc4'], ['F.Adhesive', '#840084'], ['B.Adhesive', '#000084'], ['F.Paste', '#a5958c'], ['B.Paste', '#00b4b0'],
  ['F.Silkscreen', '#f2eda1'], ['B.Silkscreen', '#e8b2a7'], ['F.Mask', '#6b3a7c', '#552663'], ['B.Mask', '#147a72', '#02625c'], ['User.Drawings', '#c2c2c2'],
  ['User.Comments', '#5994dc'], ['User.Eco1', '#b4dbd2'], ['User.Eco2', '#d8c852'], ['Edge.Cuts', '#d0d2cd'], ['Margin', '#ff26e2'],
  ['F.Courtyard', '#ff26e2'], ['B.Courtyard', '#26e9ff'], ['F.Fab', '#afafaf'], ['B.Fab', '#585d84'], ['User.1', '#c2c2c2'], ['User.2', '#5994dc'],
  ['User.3', '#b4dbd2'], ['User.4', '#d8c852'], ['User.5', '#c2c2c2'], ['User.6', '#5994dc'], ['User.7', '#b4dbd2'], ['User.8', '#d8c852'],
  ['User.9', '#e8b2a7'],
];

const FILTERS = [
  ['Todos los elementos', true], ['Elementos bloqueados', false], ['Huellas', true], ['Texto', true], ['Pistas', true], ['Vías', true],
  ['Pads', true], ['Gráficos', true], ['Zonas', true], ['Áreas de Reglas', true], ['Cotas', true], ['Otros elementos', true],
];

const FilterBox = ({ label, initial }) => {
  const [checked, setChecked] = useState(initial);
  return (
    <label className="h-[15px] flex items-center gap-0.5 whitespace-nowrap">
      <span className="relative w-[13px] h-[13px] shrink-0">
        <input
          type="checkbox"
          checked={checked}
          onChange={() => setChecked(!checked)}
          className="block appearance-none w-[13px] h-[13px] border border-[#333] bg-white"
        />
        {checked && (
          <svg viewBox="0 0 13 13" className="absolute inset-0 w-[13px] h-[13px] pointer-events-none" aria-hidden="true">
            <path d="M2.5 6.5l3 3 5.5-6" fill="none" stroke="#333" strokeWidth="1.2" />
          </svg>
        )}
      </span>
      {label}
    </label>
  );
};

const Appearance = () => (
  <aside className="w-[287px] shrink-0 border-l-4 border-[#dcdcdc] flex flex-col">
    <h2 className="h-[21px] shrink-0 bg-[#b9b9b9] px-[3px] leading-5">Apariencia</h2>
    <div role="tablist" className="h-7 shrink-0 flex items-end">
      <button role="tab" aria-selected="true" className="relative z-10 w-[51px] h-6 bg-white border border-b-0 border-[#dcdcdc] pb-0.5">Capas</button>
      <button role="tab" aria-selected="false" className="w-[51px] h-[21px] border border-l-0 border-[#dcdcdc]">Objetos</button>
      <button role="tab" aria-selected="false" className="w-[46px] h-[21px] border border-l-0 border-[#dcdcdc]">Redes</button>
    </div>
    <div className="mr-0.5 bg-white border border-[#dcdcdc] flex flex-col flex-1 min-h-0">
      <ul className="ml-[3px] mr-0.5 mt-px bg-[#f0f0f0] flex-1 min-h-0 overflow-hidden">
        {LAYERS.map(([name, a, b], i) => (
          <li key={name} className={clsx('h-[18px] flex items-center pl-1', i === 0 && 'bg-[#e1e1e1]')}>
            <svg viewBox="0 0 5 9" className="w-[5px] h-[9px] mr-[7px]" aria-hidden="true">
              {i === 0 && <path d="M0 0l5 4.5L0 9z" fill="#3f3fff" />}
            </svg>
            <svg viewBox="0 0 14 11" className="w-3.5 h-[11px]" aria-hidden="true">
              <rect width="14" height="11" fill={a} />
              {b && <path d="M5 0h4v5H5zM0 5h5v4H0zM9 5h5v4H9zM5 9h4v2H5z" fill={b} />}
            </svg>
            <button type="button" aria-label={`Visibilidad de ${name}`} className="ml-1.5 mr-[5px]">
              <svg viewBox="0 0 16 16" className="block w-4 h-4" aria-hidden="true">
                <circle cx="8" cy="8" r="8" fill={DARK} />
                <path d="M1.5 8Q8 1.5 14.5 8Q8 14.5 1.5 8z" fill="#fff" />
                <circle cx="8" cy="8" r="2" fill="#fff" stroke={DARK} strokeWidth="1.3" />
              </svg>
            </button>
            {name}
          </li>
        ))}
      </ul>
      <button type="button" className="h-[25px] pb-px shrink-0 flex items-center gap-[3px] pl-3.5">
        <svg viewBox="0 0 4 8" className="w-1 h-2" aria-hidden="true"><path d="M0 0l4 4-4 4z" /></svg>
        Opciones de visualización de capas
      </button>
    </div>
    <div className="shrink-0 px-[7px] pt-[11px] pb-1.5">
      <label htmlFor="presets" className="block h-[17px] leading-4">Preconfiguraciones (Ctrl+Tab):</label>
      <Combo id="presets" value="---" />
      <label htmlFor="views" className="block h-[17px] leading-4 mt-[3px]">Vistas (Shift+Tab):</label>
      <Combo id="views" value="---" />
    </div>
    <div className="h-1 shrink-0 bg-[#dcdcdc]" />
    <h2 className="h-[21px] shrink-0 bg-[#b9b9b9] px-[3px] leading-5">Filtro de selección</h2>
    <div className="shrink-0 grid grid-cols-[133px_1fr] pl-[5px] pt-[5px] pb-1">
      {FILTERS.map(([label, on]) => <FilterBox key={label} label={label} initial={on} />)}
    </div>
  </aside>
);

/* ---------- taskbar ---------- */

const TASKS = [
  ['Vista de tareas', false, <path key="a" d="M5 3v3h9V3M5 21v-3h9v3M5 9h9v6H5zM18 3v2M18 7v2M18 12v9" fill="none" stroke="#fff" strokeWidth="1.3" />],
  ['Copilot', false, <g key="a"><path d="M8 2h6q2 0 3 3l-6 4-3 9H5q-4 0-3-5l3-8q1-3 3-3z" fill="#2e8fe6" /><path d="M8 2h5l-5 16H5q-4 0-3-5z" fill="#3dbf8a" opacity=".6" /><path d="M16 6h3q4 0 3 5l-3 8q-1 3-4 3H9q-2 0-2-3l5-2z" fill="#e2569a" /><path d="M7 18l5-1-1 5H9q-2 0-2-4z" fill="#f7a440" /></g>],
  ['Explorador', true, <g key="a"><path d="M1 3h8l2 3h12v15H1z" fill="#f0b93a" /><path d="M1 8h22v13H1z" fill="#ffd975" /><path d="M5 14h14v8h-4v-4H9v4H5z" fill="#3f8fd8" /></g>],
  ['Chrome', true, <g key="a"><circle cx="11" cy="11" r="10.5" fill="#fbc116" /><path d="M1.5 6.5a10.5 10.5 0 0 1 19 0H11l-5 7z" fill="#e33b2e" /><path d="M1.5 6.5L7 15l4 6.500A10.5 10.5 0 0 1 1.5 6.500z" fill="#2ba24c" /><circle cx="11" cy="11" r="5" fill="#4285f4" stroke="#fff" strokeWidth="1.5" /><circle cx="17" cy="17" r="6.5" fill="#0e4a52" /><circle cx="17" cy="15" r="2" fill="#fff" /><path d="M16 16h2v5h-2z" fill="#fff" /></g>],
  ['Recortes', false, <g key="a"><ellipse cx="11" cy="8" rx="10" ry="6.5" fill="#f2f2f2" stroke="#d9333f" strokeWidth="1.5" /><path d="M7 3l8 13M17 4L9 16" stroke="#a8aeb5" strokeWidth="2" /><circle cx="9" cy="19" r="2.8" fill="none" stroke="#3b8ad8" strokeWidth="2" /><circle cx="17" cy="18" r="2.8" fill="none" stroke="#3b8ad8" strokeWidth="2" /></g>],
  ['PuTTY', true, <g key="a"><path d="M11 1h11v9H11zM1 12h11v9H1z" fill="#c9c9c9" /><path d="M13 3h7v5h-7zM3 14h7v5H3z" fill="#1724c8" /><path d="M16 8l-9 5h5l-6 6 11-7h-5z" fill="#ffe92e" /></g>],
  ['Bloc de notas', true, <g key="a"><path d="M8 2h14l-5 20H2z" fill="#9fd3df" /><path d="M8 2h14l-1 3H7z" fill="#e8f3f5" /><path d="M2 22h15l5-19 1 1-4 19z" fill="#cfcfcf" /></g>],
  ['Editor de placas', true, <g key="a"><rect width="24" height="24" fill="#c2189b" /><path d="M2 2h13v6H2zM18 2v12M21 2v12M3 12h4v3H3zM9 12h5v3H9zM3 18h3v4H3zM8 18h3v4H8zM15 17h6v5" fill="none" stroke="#3a0530" strokeWidth="1.2" /></g>],
  ['KiCad', true, <g key="a"><rect width="24" height="24" rx="4" fill="#3148d8" /><text x="12" y="18" textAnchor="middle" fontSize="16" fontWeight="700" fill="#fff" fontFamily="Open Sans, sans-serif">Ki</text></g>],
  ['Paint', true, <g key="a"><path d="M10 3q10 0 10 9 0 6-5 4-3-1-3 2 0 4-4 3-7-1-7-9 0-9 9-9z" fill="#a9d3ea" /><circle cx="6" cy="9" r="2" fill="#e0443a" /><circle cx="12" cy="7" r="2" fill="#3fae49" /><circle cx="5" cy="14" r="2" fill="#3a78d6" /><path d="M21 1l2 2-6 13-3 6-1-1 1-6z" fill="#d69a4a" /></g>],
];

const Taskbar = () => (
  <footer className="h-10 shrink-0 flex bg-linear-to-r from-[#1b2a31] via-[#25262c] to-[#1a2b33] text-white">
    <button type="button" aria-label="Inicio" className="w-12 shrink-0 flex items-center justify-center">
      <svg viewBox="0 0 16 16" className="w-4 h-4" aria-hidden="true"><path d="M0 2.2l7-1v6.3H0zM8 1l8-1v7.5H8zM0 8.5h7v6.3l-7-1zM8 8.5h8V16l-8-1z" fill="#fff" /></svg>
    </button>
    <div className="w-[344px] shrink-0 bg-[#f2f2f2] border border-[#cfcfcf] flex items-center pl-3">
      <svg viewBox="0 0 16 16" className="w-4 h-4 shrink-0" aria-hidden="true"><circle cx="10" cy="6" r="5" fill="none" stroke="#222" strokeWidth="1.3" /><path d="M6.5 9.5L1 15" stroke="#222" strokeWidth="1.3" /></svg>
      <input type="text" aria-label="Buscar" placeholder="Escribe aquí para buscar." className="flex-1 min-w-0 ml-[11px] text-[14px] bg-transparent outline-none placeholder:text-[#404040]" />
      <svg viewBox="0 0 60 34" className="w-[60px] h-[34px] mr-2.5 shrink-0" aria-hidden="true">
        <path d="M12 8Q16-2 22 2q10 6 6 16L14 14z" fill="#c99f66" />
        <path d="M20 16Q22 4 34 4q8 2 6 10-4 8-20 6z" fill="#ecd2a8" />
        <path d="M18 3q7 3 6 10" fill="none" stroke="#a8b93c" strokeWidth="3" />
        <ellipse cx="16" cy="23" rx="15" ry="10" fill="#d2ac74" />
        <ellipse cx="17" cy="21" rx="11" ry="9" fill="#8fb31c" />
        <ellipse cx="14" cy="17" rx="5" ry="3" fill="#c9de5a" />
        <ellipse cx="37" cy="22" rx="6" ry="11" transform="rotate(-25 37 22)" fill="#e3c391" />
        <ellipse cx="50" cy="21" rx="7" ry="13" transform="rotate(15 50 21)" fill="#cda46c" />
        <ellipse cx="53" cy="21" rx="4" ry="9" transform="rotate(15 53 21)" fill="#8fae2a" />
      </svg>
    </div>
    <nav className="flex gap-px ml-px">
      {TASKS.map(([name, running, art]) => (
        <button
          key={name}
          type="button"
          aria-label={name}
          className={clsx('w-12 h-10 flex flex-col items-center', name === 'KiCad' && 'bg-[#4c5158]')}
        >
          <span className="flex-1 flex items-center">
            <svg viewBox="0 0 24 24" className={name === 'Vista de tareas' ? 'w-5 h-5' : 'w-[23px] h-[23px]'} aria-hidden="true">{art}</svg>
          </span>
          <span className={clsx('h-0.5', name === 'KiCad' ? 'w-full' : 'w-10', running && 'bg-[#76b9ed]')} />
        </button>
      ))}
    </nav>
    <div className="ml-auto flex items-center text-[12px] leading-4">
      <svg viewBox="0 0 22 22" className="w-[22px] h-[22px] mr-2" aria-hidden="true">
        <circle cx="10" cy="12" r="10" fill="#f7a81b" />
        <circle cx="15" cy="6" r="6" fill="#c8281f" />
        <text x="15" y="9" textAnchor="middle" fontSize="8" fill="#fff" fontFamily="Open Sans, sans-serif">1</text>
      </svg>
      <span className="text-[13px] mr-[9px]">20°C</span>
      <span className="text-[13px] mr-6">Soleado</span>
      <svg viewBox="0 0 12 8" className="w-3 h-2 mr-2.5" fill="none" stroke="#fff" strokeWidth="1.2" aria-hidden="true"><path d="M1 7l5-5 5 5" /></svg>
      <svg viewBox="0 0 18 18" className="w-[18px] h-[18px] mr-1.5" fill="none" stroke="#fff" strokeWidth="1.2" aria-hidden="true"><path d="M16 9V1L4 3H2v12h8M13 6q-1-2-3-2-3 0-3 4M6 6l1 2 2-1M7 11q3 1 5-2" /><circle cx="13" cy="14" r="3.5" fill="#2b73c4" stroke="none" /></svg>
      <svg viewBox="0 0 18 18" className="w-[18px] h-[18px] mr-1.5" fill="none" stroke="#fff" strokeWidth="1.2" aria-hidden="true"><path d="M6 4h11v9H5M1 2h4v4H1zM3 6v9h4M11 13v3M8 16h6" /></svg>
      <svg viewBox="0 0 18 18" className="w-[18px] h-[18px] mr-[11px]" fill="none" stroke="#fff" strokeWidth="1.2" aria-hidden="true"><path d="M1 7h3l4-4v12l-4-4H1zM10 7q1 2 0 4M12 5q3 4 0 8M14 3q5 6 0 12" /></svg>
      <span className="w-[23px] text-[11px]">ESP</span>
      <div className="w-[76px] text-[11px] leading-[18px] text-center"><div>19:59</div><div>26/2/2026</div></div>
      <button type="button" aria-label="Notificaciones" className="relative w-11 h-10 flex items-center justify-center">
        <svg viewBox="0 0 28 28" className="w-7 h-7" aria-hidden="true">
          <path d="M2 4h17v13H9l-4 4v-4H2z" fill="#fff" />
          <path d="M5 8h11M5 11h11" stroke="#1a2b33" strokeWidth="1.3" />
          <circle cx="18" cy="19" r="8" fill="#3a3f45" stroke="#9a9a9a" />
          <text x="18" y="23" textAnchor="middle" fontSize="11" fill="#fff" fontFamily="Open Sans, sans-serif">10</text>
        </svg>
      </button>
      <div className="w-[5px] h-10 border-l border-[#76808a]" />
    </div>
  </footer>
);

const MENUS = ['Archivo', 'Editar', 'Ver', 'Añadir', 'Enrutar', 'Inspeccionar', 'Herramientas', 'Preferencias', 'Ayuda'];
const STATS = [['Pads', '27', 'w-[54px]'], ['Vías', '2', 'w-[50px]'], ['Segmentos de pista', '46', 'w-[132px]'], ['Redes', '12', 'w-[60px]'], ['Sin enrutar', '3', 'w-20']];
const STATUS = [
  ['Z 4.52', 'w-[78px]'],
  ['X 127.8000  Y 88.8000', 'w-[160px]'],
  ['dx 127.8000  dy 88.8000  dist 155.6222', 'w-[251px]'],
  ['cuadrícula 0.1000', 'w-[184px]'],
  ['mm', 'w-20'],
  ['Seleccionar elemento(s)', 'w-[173px]'],
  ['', 'w-[140px]'],
];

export default function App() {
  return (
    <div className="min-h-screen bg-white flex flex-col justify-center">
      <div className="w-full aspect-video flex flex-col bg-[#efefef] text-black text-[11px] leading-4 font-['Open_Sans','Noto_Sans',sans-serif] overflow-hidden">
        <header className="bg-white shrink-0">
          <div className="h-[22px] flex items-center pl-0.5">
            <svg viewBox="0 0 16 16" className="w-4 h-4 mr-[5px]" aria-hidden="true">
              <rect width="16" height="16" rx="2" fill="#1d3b1f" />
              <path d="M1 1h14v14H1z" fill="#1b7a26" />
              <path d="M8 1q-2 7 0 14M14 2q-4 4-2 12" fill="none" stroke="#5cb25a" strokeWidth="1.5" />
              <path d="M1 2h4v4H1zM1 9h4v5H1z" fill="#e8861c" />
              <circle cx="13" cy="6" r="2" fill="#e8861c" />
            </svg>
            <h1 className="flex-1">impreso tomas — Editor de placas</h1>
            <div className="flex h-full items-start pt-[5px]">
              <button type="button" aria-label="Minimizar" className="w-[45px] flex justify-center"><svg viewBox="0 0 10 10" className="w-2.5 h-2.5"><path d="M0 5.5h10" stroke="#000" /></svg></button>
              <button type="button" aria-label="Restaurar" className="w-[46px] flex justify-center"><svg viewBox="0 0 10 10" className="w-2.5 h-2.5"><path d="M.5 2.5h7v7h-7zM2.5 2.5v-2h7v7h-2" fill="none" stroke="#000" /></svg></button>
              <button type="button" aria-label="Cerrar" className="w-[46px] mr-0.5 flex justify-center"><svg viewBox="0 0 10 10" className="w-2.5 h-2.5"><path d="M0 0l10 10M10 0L0 10" stroke="#000" /></svg></button>
            </div>
          </div>
          <nav className="h-[19px] flex pl-0.5">
            {MENUS.map((m) => <button key={m} type="button" className="px-[7px] leading-5 h-[19px]">{m}</button>)}
          </nav>
        </header>

        <div className="h-[38px] shrink-0 flex items-center gap-0.5 pl-[5px]">{renderTools(TOP_TOOLS, VSep)}</div>

        <div className="h-8 shrink-0 flex items-center gap-0.5 pl-[5px] pb-0.5">
          <Combo label="Ancho de pista" value="Pista: usar el ancho de clase de nodo" className="w-[221px]" />
          <ToolButton icon="trackAuto" label="Ancho automático" active />
          <VSep />
          <Combo label="Tamaño de vía" value="Vía: utilizar los tamaños de las clases de nodos" className="w-[271px]" />
          <VSep />
          <Combo label="Capa" value="F.Cu (PgUp)" white className="w-[137px]" />
          <ToolButton icon="layerPair" label="Par de capas" />
          <VSep />
          <Combo label="Cuadrícula" value="0.1000 mm (0.0039 in)" className="w-[149px]" />
          <VSep />
          <Combo label="Zum" value="Zum 5.00" className="w-[117px]" />
        </div>

        <main className="flex-1 min-h-0 flex">
          <div className="w-[34px] shrink-0 pt-[5px] pl-0.5 flex flex-col gap-0.5">{renderTools(LEFT_TOOLS, HSep)}</div>
          <section className="relative flex-1 min-w-0 bg-[#001023] border border-[#a0a0a0] overflow-hidden"><BoardCanvas /></section>
          <div className="w-[34px] shrink-0 pt-[5px] pl-0.5 flex flex-col gap-0.5">{renderTools(RIGHT_TOOLS, HSep)}</div>
          <Appearance />
        </main>

        <dl className="h-[31px] shrink-0 flex pl-[11px] pt-px leading-[15px]">
          {STATS.map(([k, v, w]) => (
            <div key={k} className={clsx('whitespace-nowrap', w)}><dt>{k}</dt><dd>{v}</dd></div>
          ))}
        </dl>
        <div className="h-[23px] shrink-0 flex items-center border-t border-[#d7d7d7] pt-px">
          <span className="flex-1 pl-0.5">Se ha guardado el archivo 'Z:\apps\showcase\proyecto18\impreso tomas.kicad_pcb'.</span>
          {STATUS.map(([s, w]) => (
            <span key={w} className={clsx('h-5 leading-5 border-l border-[#d7d7d7] pl-1 whitespace-pre', w)}>{s}</span>
          ))}
        </div>
        <Taskbar />
      </div>
    </div>
  );
}
